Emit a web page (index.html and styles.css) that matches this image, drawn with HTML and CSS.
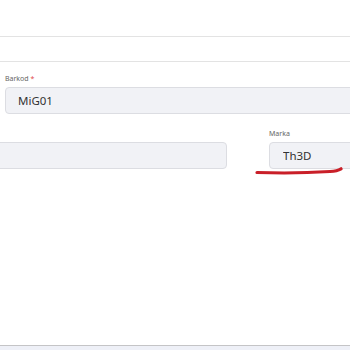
FILE: index.html
```html
<!DOCTYPE html>
<html lang="tr">
<head>
    <meta charset="UTF-8">
    <title>Ürün</title>
    <link rel="stylesheet" href="styles.css">
</head>
<body>
    <div class="page">
        <header class="top"></header>
        <nav class="tabs"></nav>
        <form class="form">
            <div class="field">
                <label>Barkod <span class="req">*</span></label>
                <input class="input wide" type="text" value="MiG01">
            </div>
            <div class="row">
                <div class="field first">
                    <label>&nbsp;</label>
                    <input class="input" type="text" value="">
                </div>
                <div class="field brand">
                    <label>Marka</label>
                    <input class="input" type="text" value="Th3D">
                    <svg class="mark" width="90" height="8" viewBox="0 0 90 8">
                        <path d="M2 5.5 C 30 6.5, 60 5.5, 75 4.5 C 80 4.2, 84 3, 86 1.8" fill="none" stroke="#c91f28" stroke-width="3.2" stroke-linecap="round"/>
                    </svg>
                </div>
            </div>
        </form>
        <footer class="bottom"></footer>
    </div>
</body>
</html>
```

FILE: styles.css
```css
body {
    margin: 0;
    padding: 0;
    background-color: #fff;
    font-family: "Noto Sans", Arial, sans-serif;
    overflow: hidden;
}

.page {
    height: 350px;
    display: flex;
    flex-direction: column;
    overflow: hidden;
}

.top {
    height: 36px;
    border-bottom: 1px solid #e3e3e3;
}

.tabs {
    height: 24px;
    border-bottom: 1px solid #e3e3e3;
}

.form {
    padding: 12px 0 0 5px;
}

.field label {
    display: block;
    font-size: 7px;
    line-height: 10px;
    color: #666;
    margin-bottom: 3px;
    white-space: nowrap;
}

.req {
    color: #e04848;
}

.input {
    box-sizing: border-box;
    display: block;
    width: 100%;
    height: 27px;
    padding: 0 0 0 12px;
    border: 1px solid #dcdde2;
    border-radius: 4px;
    background-color: #f1f2f6;
    font-family: inherit;
    font-size: 11.5px;
    color: #333;
    outline: none;
}

.input.wide {
    width: 400px;
}

.row {
    display: flex;
    gap: 42px;
    margin-top: 15px;
    margin-left: -105px;
}

.first {
    width: 327px;
    flex: none;
}

.brand {
    position: relative;
    width: 120px;
    flex: none;
}

.brand .input {
    padding-left: 13px;
}

.mark {
    position: absolute;
    left: -14px;
    top: 38px;
}

.bottom {
    margin-top: auto;
    height: 4px;
    border-top: 1px solid #c4c4c6;
    background-color: #eef0f7;
}
```
